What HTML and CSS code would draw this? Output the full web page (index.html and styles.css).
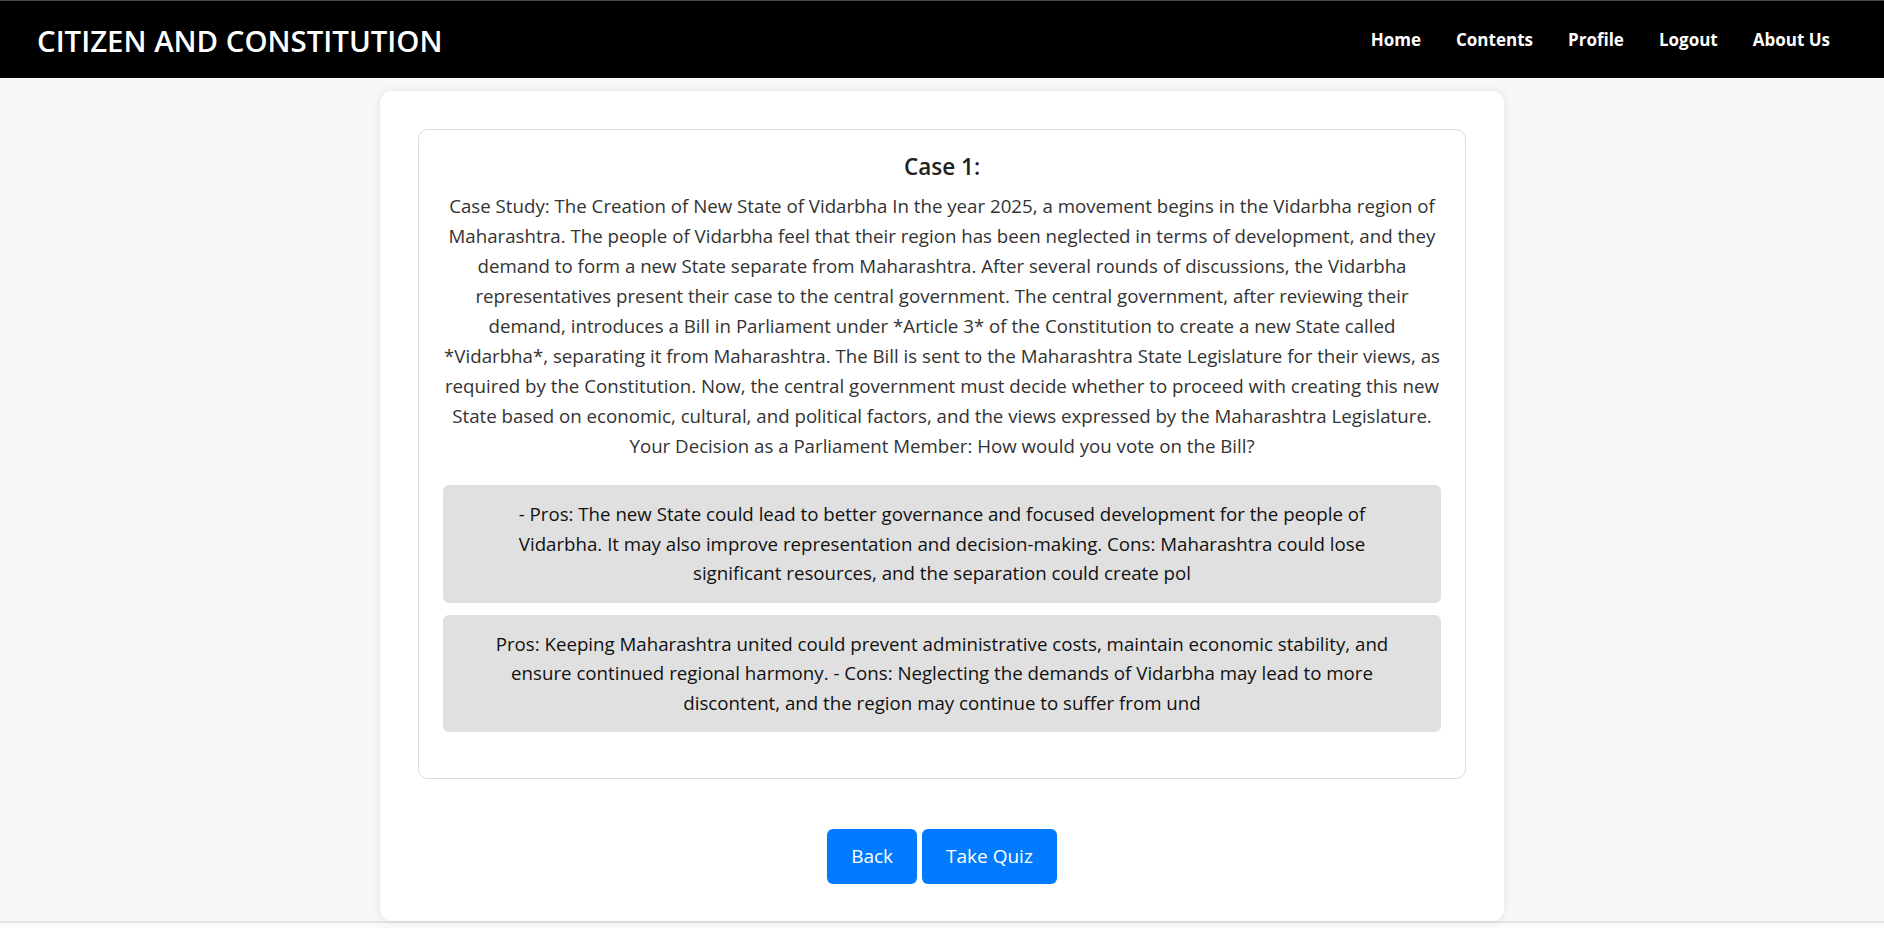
FILE: index.html
```html
<!DOCTYPE html>
<html lang="en">
<head>
<meta charset="utf-8">
<title>Citizen and Constitution</title>
<link rel="stylesheet" href="styles.css">
</head>
<body>
<header class="navbar">
  <div class="brand">CITIZEN AND CONSTITUTION</div>
  <nav class="nav-links">
    <a href="#">Home</a>
    <a href="#">Contents</a>
    <a href="#">Profile</a>
    <a href="#">Logout</a>
    <a href="#">About Us</a>
  </nav>
</header>
<main class="page">
  <section class="card">
    <div class="case-box">
      <h2 class="case-title">Case 1:</h2>
      <p class="case-text">Case Study: The Creation of New State of Vidarbha In the year 2025, a movement begins in the Vidarbha region of Maharashtra. The people of Vidarbha feel that their region has been neglected in terms of development, and they demand to form a new State separate from Maharashtra. After several rounds of discussions, the Vidarbha representatives present their case to the central government. The central government, after reviewing their demand, introduces a Bill in Parliament under *Article 3* of the Constitution to create a new State called *Vidarbha*, separating it from Maharashtra. The Bill is sent to the Maharashtra State Legislature for their views, as required by the Constitution. Now, the central government must decide whether to proceed with creating this new State based on economic, cultural, and political factors, and the views expressed by the Maharashtra Legislature. Your Decision as a Parliament Member: How would you vote on the Bill?</p>
      <div class="option">- Pros: The new State could lead to better governance and focused development for the people of Vidarbha. It may also improve representation and decision-making. Cons: Maharashtra could lose significant resources, and the separation could create pol</div>
      <div class="option">Pros: Keeping Maharashtra united could prevent administrative costs, maintain economic stability, and ensure continued regional harmony. - Cons: Neglecting the demands of Vidarbha may lead to more discontent, and the region may continue to suffer from und</div>
    </div>
    <div class="actions">
      <button class="btn">Back</button>
      <button class="btn">Take Quiz</button>
    </div>
  </section>
</main>
</body>
</html>
```

FILE: styles.css
```css
* {
  box-sizing: border-box;
}

html, body {
  margin: 0;
  padding: 0;
}

body {
  font-family: "Open Sans", "Noto Sans", sans-serif;
  background: #fafafa;
  height: 928px;
  overflow: hidden;
}

.navbar {
  height: 78px;
  background: #000;
  border-top: 1px solid #4a4a4a;
  display: flex;
  align-items: center;
  justify-content: space-between;
  padding: 0 54px 0 37px;
}

.brand {
  color: #fff;
  font-size: 29.4px;
  font-weight: 600;
  letter-spacing: 0;
  padding-top: 2px;
}

.nav-links {
  display: flex;
  gap: 35px;
  align-items: center;
}

.nav-links a {
  color: #fff;
  text-decoration: none;
  font-weight: 700;
  font-size: 17px;
}

.page {
  background: #f8f8f8;
  height: 845px;
  padding-top: 13px;
  border-bottom: 2px solid #e4e4e4;
}

.card {
  width: 1124px;
  margin: 0 auto;
  background: #fff;
  border-radius: 12px;
  box-shadow: 0 0 10px rgba(0, 0, 0, 0.09);
  padding: 38px 38px 37px;
}

.case-box {
  border: 1px solid #dcdcdc;
  border-radius: 10px;
  padding: 22px 24px 34px;
  text-align: center;
}

.case-title {
  margin: 0 0 9px;
  font-size: 22.5px;
  font-weight: 600;
  line-height: 30px;
  color: #222;
}

.case-text {
  margin: 0 0 24px;
  font-size: 18.7px;
  line-height: 30px;
  color: #333;
}

.option {
  background: #e0e0e0;
  border-radius: 6px;
  padding: 14px 40px 15px;
  margin-bottom: 12px;
  font-size: 18.7px;
  line-height: 29.5px;
  color: #111;
}

.actions {
  margin-top: 50px;
  display: flex;
  justify-content: center;
  gap: 5px;
}

.btn {
  font-family: "Open Sans", "Noto Sans", sans-serif;
  background: #007bff;
  color: #fff;
  border: none;
  border-radius: 6px;
  font-size: 19px;
  line-height: 29px;
  padding: 13px 24px;
}
```
